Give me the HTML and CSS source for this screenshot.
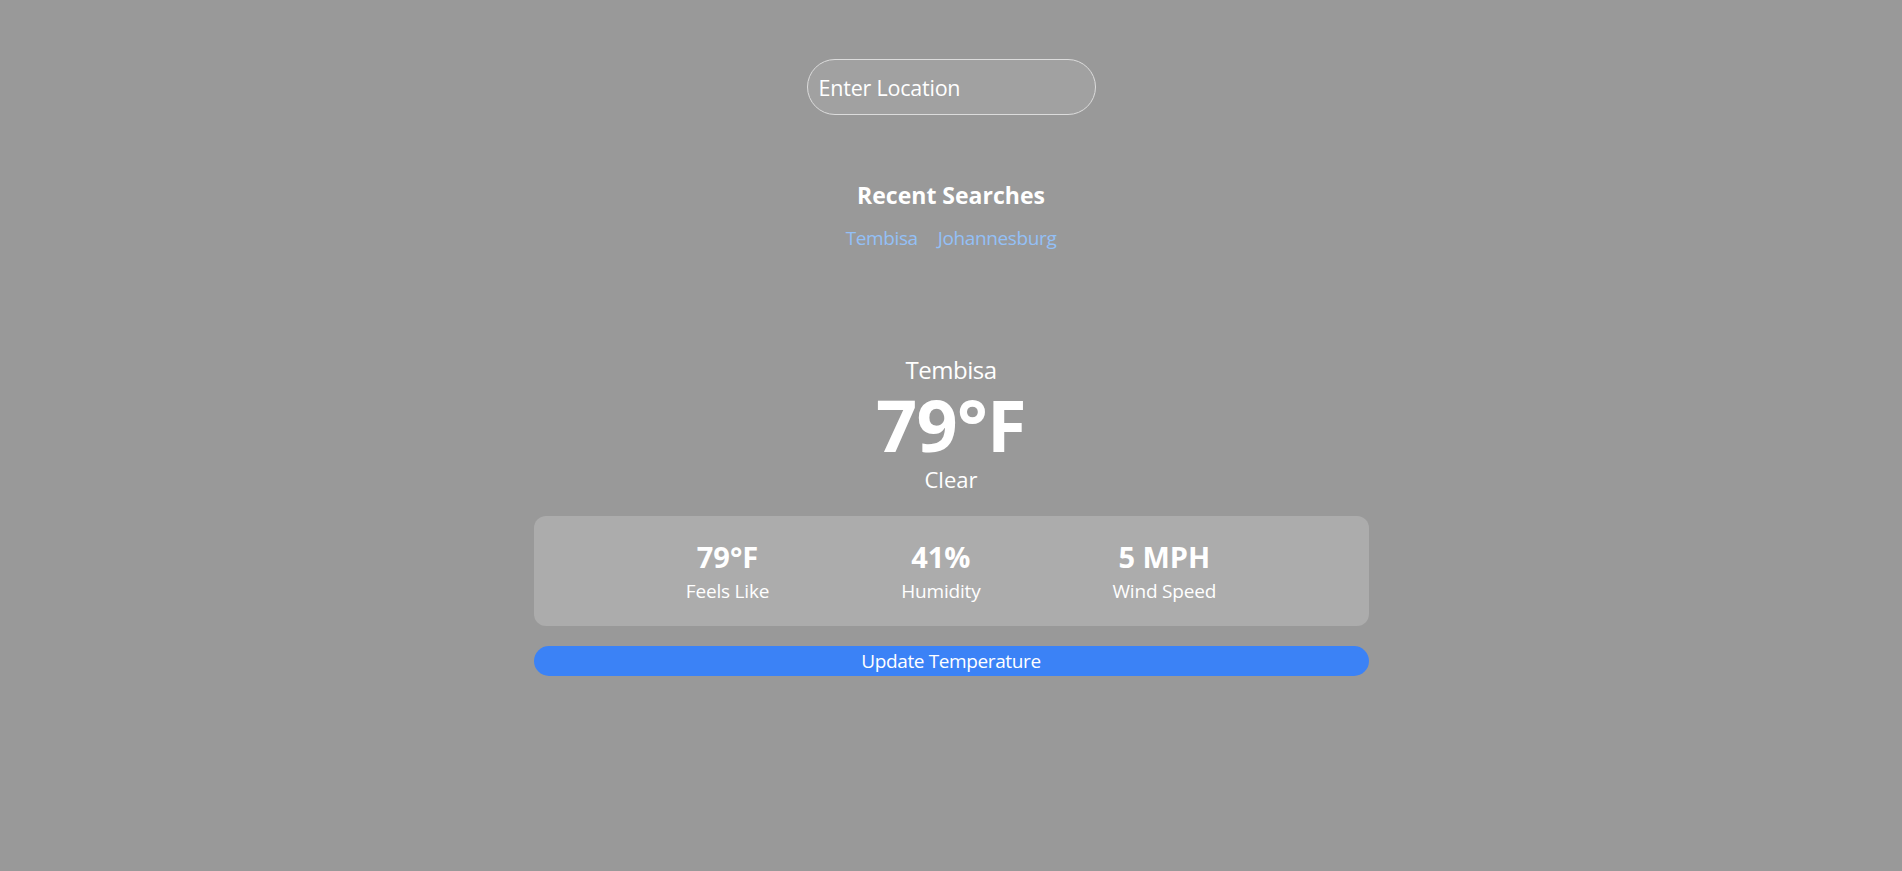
FILE: index.html
```html
<!DOCTYPE html>
<html lang="en">
<head>
<meta charset="utf-8">
<title>Weather</title>
<link rel="stylesheet" href="styles.css">
</head>
<body>
<main class="app">
  <input class="search" type="text" placeholder="Enter Location">

  <section class="recent">
    <h2 class="recent-title">Recent Searches</h2>
    <div class="recent-list">
      <a class="recent-link" href="#">Tembisa</a>
      <a class="recent-link" href="#">Johannesburg</a>
    </div>
  </section>

  <section class="current">
    <div class="city">Tembisa</div>
    <div class="temp">79°F</div>
    <div class="cond">Clear</div>
  </section>

  <section class="stats">
    <div class="stat">
      <div class="stat-value">79°F</div>
      <div class="stat-label">Feels Like</div>
    </div>
    <div class="stat">
      <div class="stat-value">41%</div>
      <div class="stat-label">Humidity</div>
    </div>
    <div class="stat">
      <div class="stat-value">5 MPH</div>
      <div class="stat-label">Wind Speed</div>
    </div>
  </section>

  <button class="update" type="button">Update Temperature</button>
</main>
</body>
</html>
```

FILE: styles.css
```css
* { box-sizing: border-box; }

html, body {
  margin: 0;
  padding: 0;
  background: #999999;
  height: 100%;
}

body {
  font-family: "Open Sans", "Noto Sans", sans-serif;
  color: #ffffff;
}

.app {
  display: flex;
  flex-direction: column;
  align-items: center;
  padding-top: 59px;
}

.search {
  width: 289px;
  height: 56px;
  border: 1px solid #dcdcdc;
  border-radius: 28px;
  background: #a1a1a1;
  color: #ffffff;
  font-family: inherit;
  font-size: 21.5px;
  letter-spacing: -0.01em;
  padding: 0 0 0 11px;
  outline: none;
}

.search::placeholder {
  color: #ffffff;
  opacity: 1;
}

.recent {
  margin-top: 63px;
  display: flex;
  flex-direction: column;
  align-items: center;
}

.recent-title {
  margin: 0;
  font-size: 23px;
  line-height: 34px;
  font-weight: 700;
}

.recent-list {
  margin-top: 11px;
  display: flex;
  gap: 20px;
}

.recent-link {
  color: #93c0f7;
  text-decoration: none;
  font-size: 19px;
  line-height: 30px;
  letter-spacing: -0.02em;
}

.current {
  margin-top: 103px;
  display: flex;
  flex-direction: column;
  align-items: center;
}

.city {
  font-size: 24px;
  line-height: 28px;
  letter-spacing: -0.02em;
}

.temp {
  font-size: 72px;
  line-height: 80px;
  font-weight: 700;
  letter-spacing: -0.01em;
}

.cond {
  margin-top: 1px;
  font-size: 22px;
  line-height: 28px;
}

.stats {
  margin-top: 23px;
  width: 835px;
  height: 110px;
  background: #acacac;
  border-radius: 12px;
  display: flex;
  justify-content: center;
  gap: 132px;
  padding-top: 22px;
}

.stat {
  display: flex;
  flex-direction: column;
  align-items: center;
}

.stat-value {
  font-size: 29px;
  line-height: 38px;
  font-weight: 700;
}

.stat-label {
  font-size: 19px;
  line-height: 30px;
  letter-spacing: -0.01em;
}

.update {
  margin-top: 20px;
  width: 835px;
  height: 30px;
  border: none;
  border-radius: 15px;
  background: #3b82f6;
  color: #ffffff;
  font-family: inherit;
  font-size: 19px;
  letter-spacing: -0.02em;
  line-height: 30px;
  padding: 0;
}
```
